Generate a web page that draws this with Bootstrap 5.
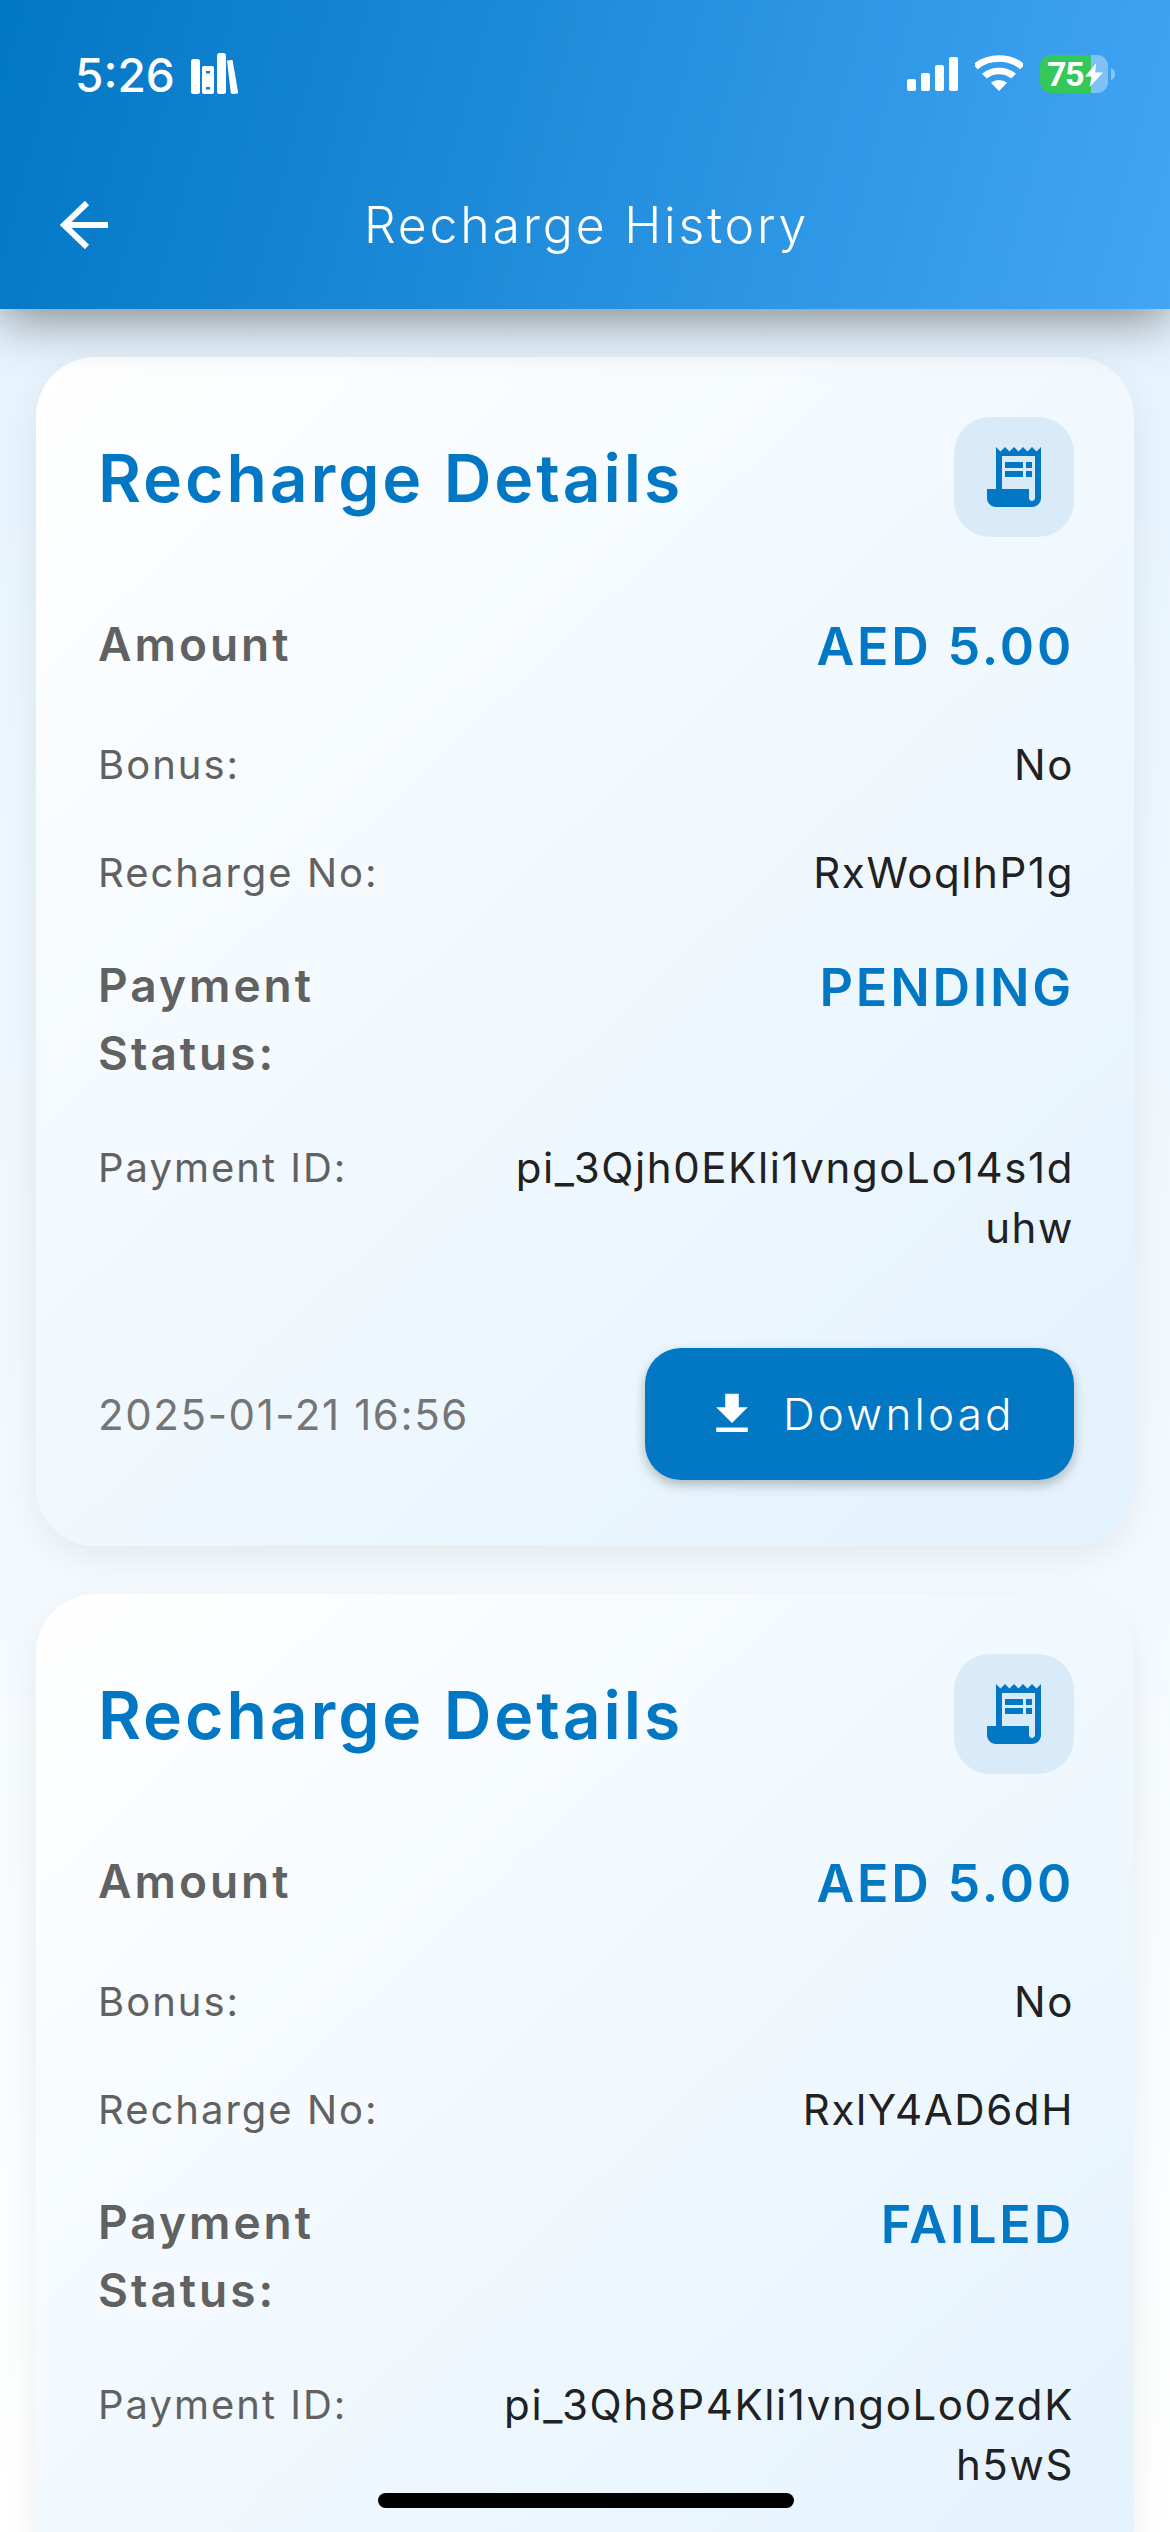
<!DOCTYPE html>
<html lang="en">

<head>
  <meta charset="UTF-8">
  <meta name="viewport" content="width=device-width, initial-scale=1.0">
  <title>Recharge History</title>
  <link href="https://cdn.jsdelivr.net/npm/bootstrap@5.3.0/dist/css/bootstrap.min.css" rel="stylesheet">
  <style>
    body {
      height: 2532px;
      overflow: hidden;
      position: relative;
      font-family: Inter, "Liberation Sans", sans-serif;
      background: linear-gradient(180deg, #e3f2fd 0%, #ffffff 100%);
    }

    .app-header {
      height: 309px;
      position: relative;
      z-index: 2;
      color: #fff;
      background: linear-gradient(105deg, #0277c4 0%, #42a5f5 100%);
      box-shadow: 0 10px 48px rgba(0, 0, 0, .45);
    }

    .status-row {
      height: 148px;
      padding: 53px 55px 0 75px;
    }

    .status-time {
      font-size: 46px;
      line-height: 44px;
      font-weight: 500;
    }

    .status-right {
      margin-top: 2px;
      gap: 17px;
    }

    .batt-box {
      width: 68px;
      height: 38px;
      border-radius: 11px;
      position: relative;
      background: linear-gradient(90deg, #34c759 75%, rgba(255, 255, 255, .35) 75%);
      font: 700 34px/38px Roboto, sans-serif;
      letter-spacing: -1.5px;
      padding-left: 7px;
    }

    .batt-bolt {
      position: absolute;
      left: 45px;
      top: 8px;
    }

    .batt-nub {
      margin: 13px 0 0 -14px;
    }

    .title-row {
      height: 161px;
      position: relative;
    }

    .back-btn {
      position: absolute;
      left: 60px;
      top: 53px;
    }

    .page-title {
      font-size: 50px;
      font-weight: 300;
      letter-spacing: 2.8px;
      line-height: 60px;
      margin: 0 0 0 3px;
      padding-top: 47px;
    }

    .history-list {
      padding: 48px 36px 0;
    }

    .recharge-card {
      border: 0;
      border-radius: 60px;
      margin-bottom: 48px;
      background: linear-gradient(137deg, #ffffff 0%, #e3f2fd 100%);
      box-shadow: 0 12px 36px rgba(0, 0, 0, .07);
    }

    .recharge-card .card-body {
      padding: 60px 60px 66px 62px;
    }

    .card-top {
      margin-bottom: 73px;
    }

    .card-heading {
      color: #0277c4;
      font-size: 66px;
      font-weight: 600;
      letter-spacing: 2.9px;
      margin: 2px 0 0;
      line-height: 80px;
    }

    .icon-tile {
      width: 120px;
      height: 120px;
      border-radius: 36px;
      background: #d9ebf8;
    }

    .detail-row {
      margin-bottom: 48px;
    }

    .row-amount {
      margin-bottom: 51px;
    }

    .row-status {
      margin-bottom: 51px;
    }

    .detail-label {
      flex: 0 0 400px;
      color: #616161;
      font-size: 40px;
      line-height: 60px;
      letter-spacing: 2px;
    }

    .detail-value {
      flex: 0 0 576px;
      color: #212121;
      font-size: 42px;
      line-height: 60px;
      letter-spacing: 1.6px;
      text-align: right;
      word-break: break-all;
    }

    .detail-label.strong {
      font-size: 46px;
      line-height: 68px;
      font-weight: 600;
      letter-spacing: 3px;
    }

    .detail-value.strong {
      color: #0277c4;
      font-size: 52px;
      line-height: 74px;
      font-weight: 600;
      letter-spacing: 2.8px;
    }

    .card-foot {
      margin-top: 90px;
    }

    .stamp {
      color: #757575;
      font-size: 42px;
      letter-spacing: 1.6px;
    }

    .btn-download {
      width: 429px;
      height: 132px;
      border: 0;
      border-radius: 36px;
      padding: 0 0 0 60px;
      color: #fff;
      background: #0277c4;
      font-size: 44px;
      font-weight: 300;
      letter-spacing: 3.2px;
      box-shadow: 0 5px 12px rgba(0, 0, 0, .25);
    }

    .home-bar {
      position: absolute;
      z-index: 3;
      left: 378px;
      bottom: 24px;
      width: 416px;
      height: 15px;
      border-radius: 8px;
      background: #000;
    }
  </style>
</head>

<body>
  <header class="app-header">
    <div class="status-row d-flex justify-content-between align-items-start">
      <div class="d-flex align-items-start gap-3">
        <span class="status-time">5:26</span>
        <svg width="47" height="41" viewBox="0 0 47 41" fill="#fff">
          <rect x="0" y="6" width="9" height="35" rx="2.500" />
          <path fill-rule="evenodd" d="M13 13h8a2 2 0 0 1 2 2v24a2 2 0 0 1-2 2h-8a2 2 0 0 1-2-2V15a2 2 0 0 1 2-2zm2 5v2.500h4V18zm0 16v2.500h4V34z" />
          <rect x="26" y="0" width="9" height="41" rx="2.500" />
          <path d="M36 7.500l5.500-.5 5.500 31.500a2 2 0 0 1-1.700 2.300l-3.600.2a2 2 0 0 1-2-1.700z" />
        </svg>
      </div>
      <div class="status-right d-flex align-items-start">
        <svg width="51" height="36" viewBox="0 0 51 36" fill="#fff">
          <rect x="0" y="24" width="9" height="12" rx="2" />
          <rect x="14" y="18" width="9" height="18" rx="2" />
          <rect x="28" y="10" width="9" height="26" rx="2" />
          <rect x="42" y="2" width="9" height="34" rx="2" />
        </svg>
        <svg width="48" height="36" viewBox="0 0 44 36" preserveAspectRatio="none" fill="none" stroke="#fff" stroke-width="6.500">
          <path d="M.3 11.900A32.500 32.500 0 0 1 43.700 11.900" />
          <path d="M8.600 21.100A20 20 0 0 1 35.400 21.100" />
          <path d="M22 36 14.600 27.800A11 11 0 0 1 29.400 27.800Z" fill="#fff" stroke="none" />
        </svg>
        <div class="batt-box">75
          <svg class="batt-bolt" width="18" height="24" viewBox="0 0 16 25" preserveAspectRatio="none" fill="#fff">
            <path d="M10 0 0 14h6l-2 11L16 10H9z" />
          </svg>
        </div>
        <svg class="batt-nub" width="4" height="12" viewBox="0 0 4 12" fill="rgba(255,255,255,.4)">
          <path d="M0 0c2 .5 4 3 4 6s-2 5.500-4 6z" />
        </svg>
      </div>
    </div>
    <div class="title-row text-center">
      <a class="back-btn" href="#" aria-label="Back">
        <svg class="d-block" width="48" height="48" viewBox="0 0 48 48" fill="none" stroke="#fff" stroke-width="6">
          <path d="M48 24H5M27 2 4 24l23 22" />
        </svg>
      </a>
      <h1 class="page-title">Recharge History</h1>
    </div>
  </header>

  <main class="history-list">
    <div class="card recharge-card">
      <div class="card-body">
        <div class="card-top d-flex justify-content-between align-items-center">
          <h2 class="card-heading">Recharge Details</h2>
          <div class="icon-tile d-flex align-items-center justify-content-center">
            <svg width="72" height="72" viewBox="0 0 24 24" fill="#0277c4">
              <path d="M19.500 3.500 18 2l-1.500 1.500L15 2l-1.500 1.500L12 2l-1.500 1.500L9 2 7.500 3.500 6 2v14H3v3c0 1.660 1.340 3 3 3h12c1.660 0 3-1.340 3-3V2l-1.500 1.500zM19 19c0 .55-.45 1-1 1s-1-.45-1-1v-3H8V5h11v14z" />
              <path d="M9 7h6v2H9zM16 7h2v2h-2zM9 10h6v2H9zM16 10h2v2h-2z" />
            </svg>
          </div>
        </div>
        <div class="detail-row row-amount d-flex">
          <div class="detail-label strong">Amount</div>
          <div class="detail-value strong">AED 5.00</div>
        </div>
        <div class="detail-row d-flex">
          <div class="detail-label">Bonus:</div>
          <div class="detail-value">No</div>
        </div>
        <div class="detail-row d-flex">
          <div class="detail-label">Recharge No:</div>
          <div class="detail-value">RxWoqlhP1g</div>
        </div>
        <div class="detail-row row-status d-flex">
          <div class="detail-label strong">Payment<br>Status:</div>
          <div class="detail-value strong">PENDING</div>
        </div>
        <div class="detail-row d-flex">
          <div class="detail-label">Payment ID:</div>
          <div class="detail-value">pi_3Qjh0EKli1vngoLo14s1duhw</div>
        </div>
        <div class="card-foot d-flex justify-content-between align-items-center">
          <span class="stamp">2025-01-21 16:56</span>
          <button type="button" class="btn btn-download d-flex align-items-center gap-4">
            <svg width="54" height="54" viewBox="0 0 24 24" fill="#fff">
              <path d="M19 9h-4V3H9v6H5l7 7 7-7zM5 18v2h14v-2H5z" />
            </svg>
            Download
          </button>
        </div>
      </div>
    </div>

    <div class="card recharge-card">
      <div class="card-body">
        <div class="card-top d-flex justify-content-between align-items-center">
          <h2 class="card-heading">Recharge Details</h2>
          <div class="icon-tile d-flex align-items-center justify-content-center">
            <svg width="72" height="72" viewBox="0 0 24 24" fill="#0277c4">
              <path d="M19.500 3.500 18 2l-1.500 1.500L15 2l-1.500 1.500L12 2l-1.500 1.500L9 2 7.500 3.500 6 2v14H3v3c0 1.660 1.340 3 3 3h12c1.660 0 3-1.340 3-3V2l-1.500 1.500zM19 19c0 .55-.45 1-1 1s-1-.45-1-1v-3H8V5h11v14z" />
              <path d="M9 7h6v2H9zM16 7h2v2h-2zM9 10h6v2H9zM16 10h2v2h-2z" />
            </svg>
          </div>
        </div>
        <div class="detail-row row-amount d-flex">
          <div class="detail-label strong">Amount</div>
          <div class="detail-value strong">AED 5.00</div>
        </div>
        <div class="detail-row d-flex">
          <div class="detail-label">Bonus:</div>
          <div class="detail-value">No</div>
        </div>
        <div class="detail-row d-flex">
          <div class="detail-label">Recharge No:</div>
          <div class="detail-value">RxlY4AD6dH</div>
        </div>
        <div class="detail-row row-status d-flex">
          <div class="detail-label strong">Payment<br>Status:</div>
          <div class="detail-value strong">FAILED</div>
        </div>
        <div class="detail-row d-flex">
          <div class="detail-label">Payment ID:</div>
          <div class="detail-value">pi_3Qh8P4Kli1vngoLo0zdKh5wS</div>
        </div>
      </div>
    </div>
  </main>

  <div class="home-bar"></div>

  <script src="https://cdn.jsdelivr.net/npm/bootstrap@5.3.0/dist/js/bootstrap.bundle.min.js"></script>
</body>

</html>
